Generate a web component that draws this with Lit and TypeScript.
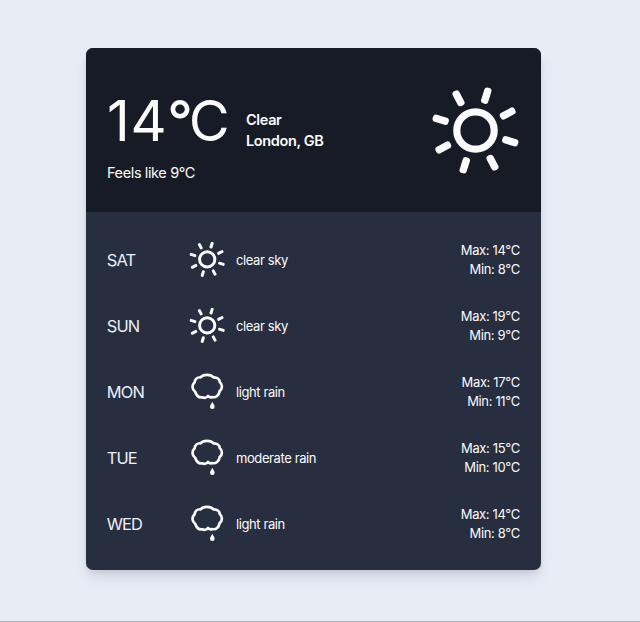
import { LitElement, html, svg, css } from "lit";
import { customElement, property } from "lit/decorators.js";

type Condition = "sun" | "rain";

interface Day {
  name: string;
  icon: Condition;
  text: string;
  max: number;
  min: number;
}

const DAYS: Day[] = [
  { name: "SAT", icon: "sun", text: "clear sky", max: 14, min: 8 },
  { name: "SUN", icon: "sun", text: "clear sky", max: 19, min: 9 },
  { name: "MON", icon: "rain", text: "light rain", max: 17, min: 11 },
  { name: "TUE", icon: "rain", text: "moderate rain", max: 15, min: 10 },
  { name: "WED", icon: "rain", text: "light rain", max: 14, min: 8 },
];

const RAYS = [0, 1, 2, 3, 4, 5, 6, 7].map((i) => 17.2 + i * 45);

@customElement("weather-icon")
export class WeatherIcon extends LitElement {
  @property() kind: Condition = "sun";

  static styles = css`
    :host {
      display: block;
    }
    svg {
      display: block;
      width: 100%;
      height: 100%;
    }
  `;

  render() {
    if (this.kind === "sun") {
      return html`<svg viewBox="-49.5 -47.5 98 98" fill="#fbfbfc">
        <circle r="18.7" fill="none" stroke="#fbfbfc" stroke-width="7.2"></circle>
        ${RAYS.map(
          (a) =>
            svg`<rect x="-3.7" y="-44.6" width="7.4" height="16.4" rx="3" transform="rotate(${a})"></rect>`
        )}
      </svg>`;
    }
    return html`<svg viewBox="21 36 120 120">
      <path
        d="M62 52C69 42 93 42 100 52C111 51 119 58 119 66C128 73 128 85 119 93C117 106 108 114 96 111C91 114 87 111 84 108C80 113 73 115 66 112C56 113 49 106 46 96C35 88 35 75 44 67C45 58 52 51 62 52Z"
        fill="none"
        stroke="#fbfbfc"
        stroke-width="8"
        stroke-linejoin="round"
      ></path>
      <path d="M97 125C99 130 104 135 104 140A7 7 0 0 1 90 140C90 135 95 130 97 125Z" fill="#fbfbfc"></path>
    </svg>`;
  }
}

@customElement("app-root")
export class AppRoot extends LitElement {
  static styles = css`
    :host {
      display: flex;
      flex-direction: column;
      box-sizing: border-box;
      height: 622px;
      padding: 48px 99px 0 85.5px;
      background: #e7ecf5;
      border-bottom: 1px solid #aeb3b9;
      font-family: Inter, "Liberation Sans", sans-serif;
      color: #fbfbfc;
    }
    .card {
      height: 522.4px;
      border-radius: 7px;
      overflow: hidden;
      background: #272e3f;
      box-shadow: 0 9px 15px -3px rgba(30, 25, 50, 0.12), 0 3px 6px -2px rgba(30, 25, 50, 0.12);
    }
    .current {
      box-sizing: border-box;
      height: 163.5px;
      padding: 38px 17px 0 21.5px;
      display: flex;
      justify-content: space-between;
      background: #171b26;
    }
    .summary {
      display: flex;
      gap: 18px;
      height: 77.5px;
    }
    .temp {
      font-size: 56px;
      line-height: 70px;
      width: 121px;
      white-space: nowrap;
    }
    .digits {
      letter-spacing: 0.6px;
    }
    .degree {
      font-weight: 500;
      letter-spacing: -4px;
    }
    .place {
      padding-top: 22.5px;
      font-size: 14.5px;
      line-height: 21.5px;
      font-weight: 600;
      letter-spacing: -0.35px;
      white-space: nowrap;
    }
    .feels {
      font-size: 14.5px;
      line-height: 18px;
      letter-spacing: -0.38px;
    }
    .large {
      width: 98px;
      height: 98px;
      margin-top: -3.5px;
    }
    .days {
      padding: 15.5px 21.2px 0 21.2px;
    }
    .day {
      height: 66px;
      display: flex;
      align-items: center;
    }
    .name {
      width: 80.3px;
      font-size: 16.4px;
      letter-spacing: -0.8px;
      color: #edf0f9;
    }
    .small {
      width: 40px;
      height: 40px;
    }
    .text {
      flex: 1;
      padding-left: 9px;
      font-size: 13px;
      letter-spacing: -0.4px;
    }
    .range {
      font-size: 13px;
      line-height: 18.7px;
      letter-spacing: -0.36px;
      text-align: right;
    }
  `;

  render() {
    return html`
      <div class="card">
        <div class="current">
          <div>
            <div class="summary">
              <div class="temp"><span class="digits">14</span><span class="degree">°</span>C</div>
              <div class="place">
                <div>Clear</div>
                <div>London, GB</div>
              </div>
            </div>
            <div class="feels">Feels like 9°C</div>
          </div>
          <weather-icon class="large" kind="sun"></weather-icon>
        </div>
        <div class="days">
          ${DAYS.map(
            (d) => html`<div class="day">
              <div class="name">${d.name}</div>
              <weather-icon class="small" kind=${d.icon}></weather-icon>
              <div class="text">${d.text}</div>
              <div class="range">
                <div>Max: ${d.max}°C</div>
                <div>Min: ${d.min}°C</div>
              </div>
            </div>`
          )}
        </div>
      </div>
    `;
  }
}
